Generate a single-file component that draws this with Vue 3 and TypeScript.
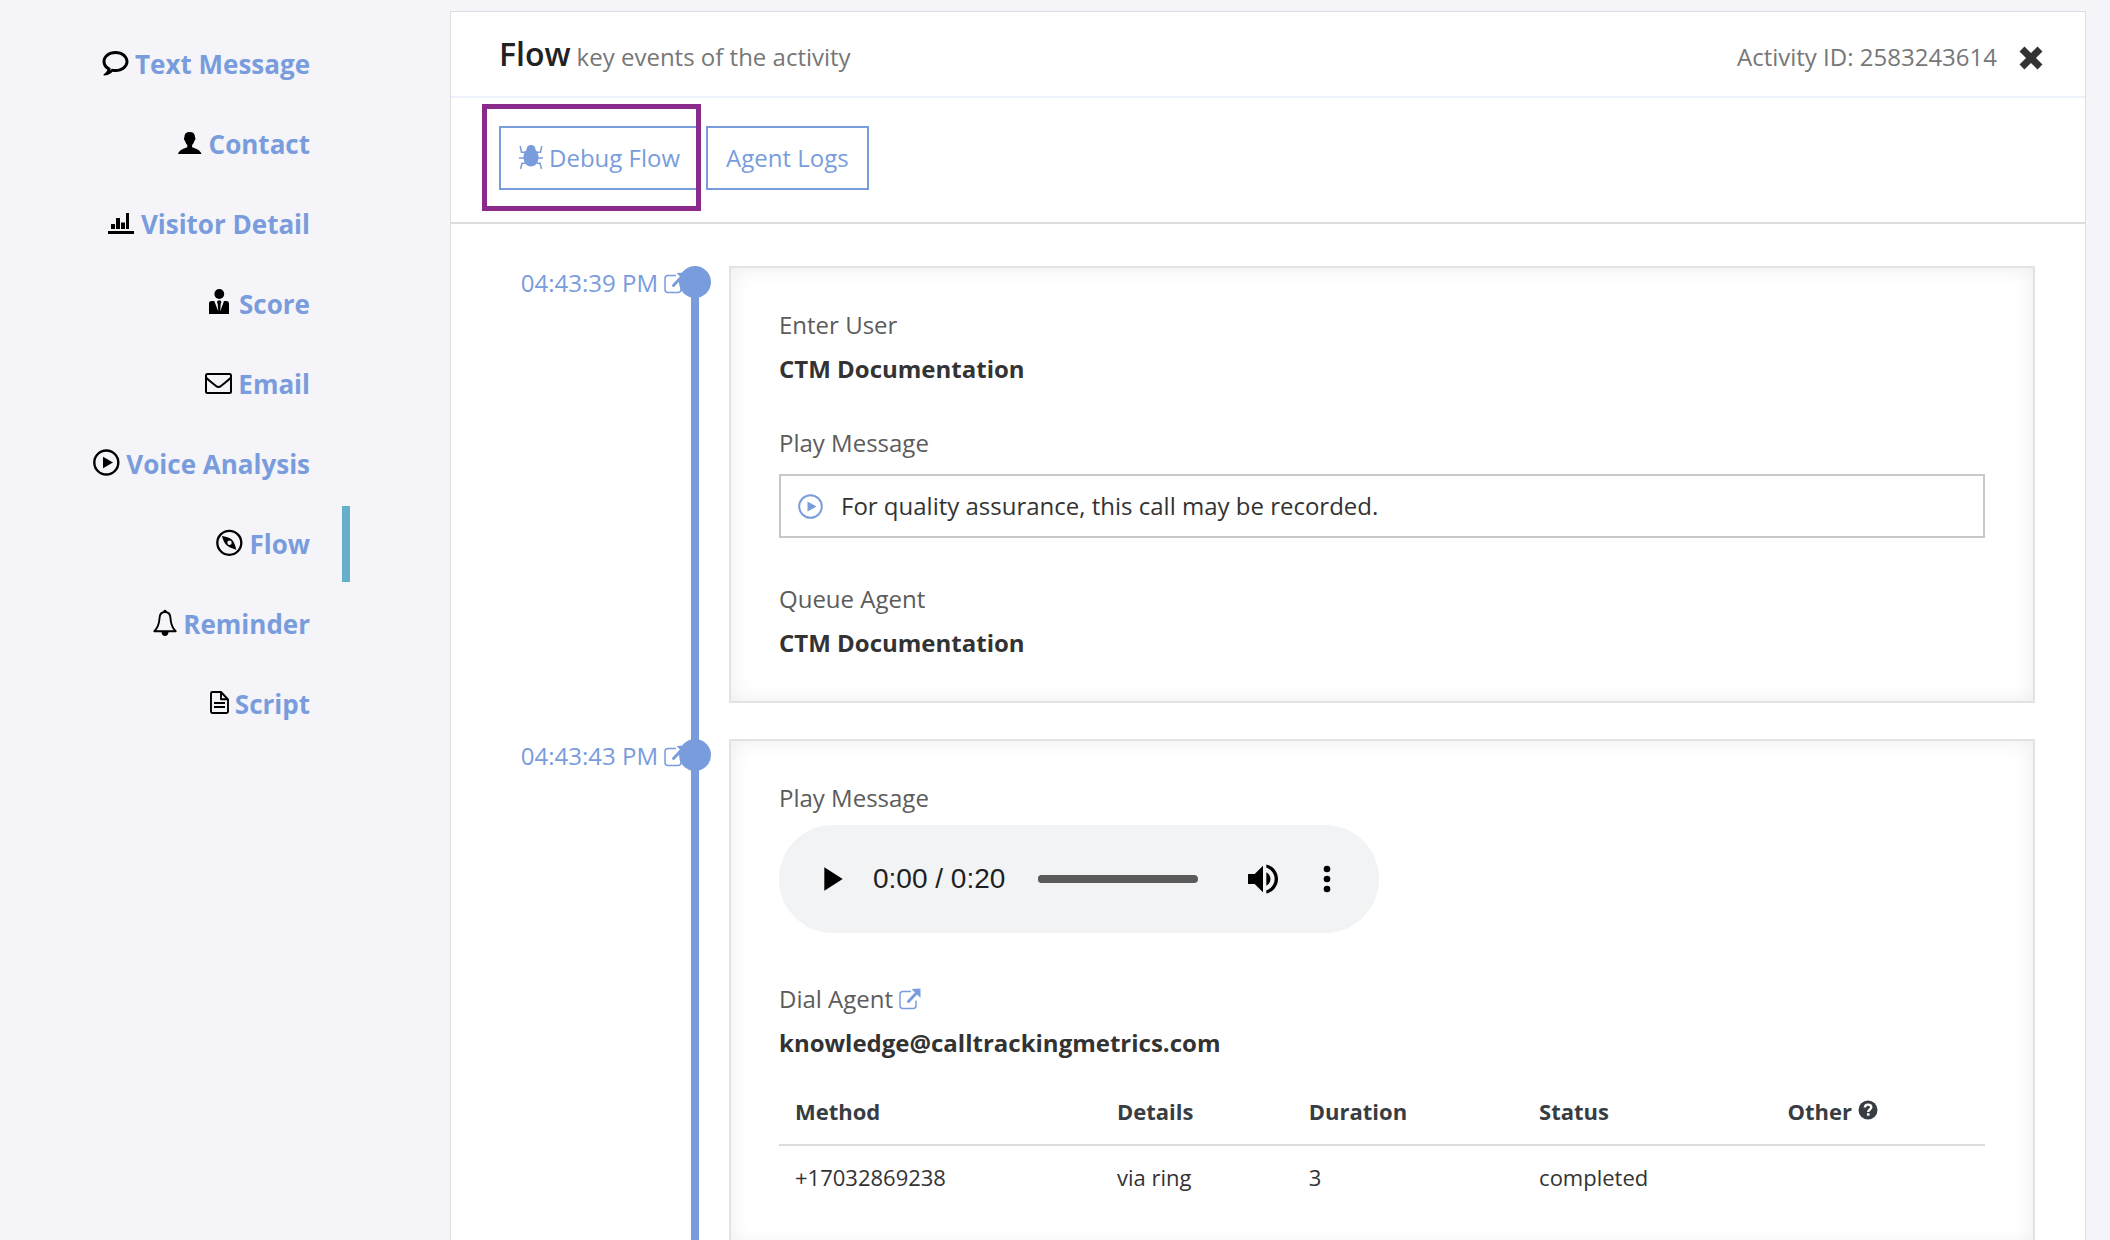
<script setup lang="ts">
import { ref } from 'vue'

type IconName = 'comment' | 'person' | 'chart' | 'agent' | 'mail' | 'play' | 'compass' | 'bell' | 'script'

interface NavItem {
  label: string
  icon: IconName
  width: number
}

interface DialRow {
  method: string
  details: string
  duration: string
  status: string
  other: string
}

const navItems: NavItem[] = [
  { label: 'Text Message', icon: 'comment', width: 27 },
  { label: 'Contact', icon: 'person', width: 25 },
  { label: 'Visitor Detail', icon: 'chart', width: 27 },
  { label: 'Score', icon: 'agent', width: 24 },
  { label: 'Email', icon: 'mail', width: 27 },
  { label: 'Voice Analysis', icon: 'play', width: 27 },
  { label: 'Flow', icon: 'compass', width: 27 },
  { label: 'Reminder', icon: 'bell', width: 24 },
  { label: 'Script', icon: 'script', width: 19 },
]

const active = ref('Flow')
const position = ref(0)

const rows: DialRow[] = [
  { method: '+17032869238', details: 'via ring', duration: '3', status: 'completed', other: '' },
]
</script>

<template>
  <div class="page">
    <nav class="sidebar" aria-label="Activity sections">
      <ul>
        <li v-for="item in navItems" :key="item.label" :class="{ active: item.label === active }">
          <a href="#" @click.prevent="active = item.label">
            <svg class="nav-icon" :width="item.width" height="30" :viewBox="`0 -1 ${item.width} 30`" aria-hidden="true">
              <path
                v-if="item.icon === 'comment'"
                fill-rule="evenodd"
                d="M13.5 1C20.800 1 26.500 5.800 26.500 11.500S20.800 22 13.500 22C12.600 22 11.600 22 10.700 21.800C8.300 24.200 5.300 25.500 2 25.500C1.300 25.500 1.300 24.700 1.800 24.300C3.500 23 4.900 21.500 5.300 19.800C2.200 17.900.5 15 .5 11.500C.5 5.800 6.200 1 13.500 1ZM13.500 4C7.900 4 3.500 7.300 3.500 11.500C3.500 14.200 5.200 16.500 8.700 18.200L8.100 20.400L9.900 18.800C11 19 12.300 19.100 13.500 19.100C19.100 19.100 23.500 15.700 23.500 11.500S19.100 4 13.500 4Z"
              />
              <path
                v-else-if="item.icon === 'person'"
                d="M11.700 2C15.200 2 17 3.900 17 7.200C18 8.600 17.300 10.200 16.300 11C15.900 12.700 15.100 14 14.100 15V17.200C15.600 18.100 22.500 19.300 23.500 24H0C1 19.300 7.800 18.100 9.300 17.200V15C8.300 14 7.500 12.700 7.100 11C6.100 10.200 5.400 8.600 6.400 7.200C6.400 3.900 8.200 2 11.700 2Z"
              />
              <path
                v-else-if="item.icon === 'chart'"
                d="M0 21H26V24H0ZM3 14H7V19H3ZM8 8H12V19H8ZM13 12.500H17V19H13ZM18 3H21V19H18Z"
              />
              <g v-else-if="item.icon === 'agent'">
                <circle cx="10.300" cy="4" r="4.900" />
                <path d="M0 24V13.500Q0 11 2.500 11H5.300L9.300 21.500L8.700 14L8 12L8.800 10.500H11.600L12.400 12L11.700 14L11.200 21.500L15 11H17.800Q20 11 20 13.500V24Z" />
              </g>
              <g v-else-if="item.icon === 'mail'" fill="none" stroke="#000" stroke-width="2">
                <rect x="1" y="4" width="25" height="19" rx="1.500" />
                <path d="M1.500 8C5 11.500 8 13.500 11 16Q13.500 18 16 16C19 13.500 22 11.500 25.500 8" />
              </g>
              <g v-else-if="item.icon === 'play'">
                <circle cx="13.300" cy="12.500" r="12" fill="none" stroke="#000" stroke-width="2.400" />
                <path d="M10 6.800V18.200L20 12.500Z" />
              </g>
              <g v-else-if="item.icon === 'compass'">
                <circle cx="13.300" cy="12.800" r="12" fill="none" stroke="#000" stroke-width="2.300" />
                <path
                  fill-rule="evenodd"
                  d="M5.900 6C9.500 6.300 13.500 7.500 16 9.800C18.200 12 19.500 16 20.300 19.800C16.500 18.500 12.500 17 10.400 15C8.300 12.900 6.800 9.500 5.900 6ZM13.500 10.500A2.200 2.200 0 1 0 13.500 14.900A2.200 2.200 0 1 0 13.500 10.500Z"
                />
              </g>
              <g v-else-if="item.icon === 'bell'">
                <path
                  d="M12 2C8.800 2 6.900 4.300 6.600 7.500C6.300 12.500 5.500 17.500 1.300 21.200H22.700C18.500 17.500 17.700 12.500 17.400 7.500C17.100 4.300 15.200 2 12 2Z"
                  fill="none" stroke="#000" stroke-width="1.900" stroke-linejoin="round"
                />
                <circle cx="12" cy="1.400" r="1.700" />
                <path d="M8.500 22H15.500C15.500 27.300 8.500 27.300 8.500 22Z" />
              </g>
              <g v-else fill="none" stroke="#000" stroke-width="1.900" stroke-linejoin="round">
                <path d="M2.500 2H11L18 9.500V21.500Q18 23 16.500 23H2.500Q1 23 1 21.500V3.500Q1 2 2.500 2Z" />
                <path d="M11 2V9.300H18M4 13H15M4 17H15" />
              </g>
            </svg>
            <span>{{ item.label }}</span>
          </a>
        </li>
      </ul>
    </nav>

    <main class="panel">
      <header class="panel-head">
        <h1>Flow <small>key events of the activity</small></h1>
        <div class="head-right">
          <span>Activity ID: 2583243614</span>
          <button type="button" class="close" aria-label="Close">
            <svg width="26" height="26" viewBox="0 -1 26 26" aria-hidden="true">
              <path d="M4 4L22 22M22 4L4 22" fill="none" stroke="#333" stroke-width="7" />
            </svg>
          </button>
        </div>
      </header>

      <div class="toolbar">
        <div class="highlighted">
          <button type="button" class="btn">
            <svg width="24" height="26" viewBox="0 0 24 26" aria-hidden="true">
              <path d="M12 0C14.800 0 16.500 1.900 16.600 5C18.700 7 19.500 9.300 19.500 12C19.500 17.500 16.600 21.500 12 21.500S4.500 17.500 4.500 12C4.500 9.300 5.300 7 7.400 5C7.500 1.900 9.200 0 12 0Z" fill="currentColor" />
              <path
                d="M1.200 1L2.500 7.200H7M22.800 1L21.500 7.200H17M0 13H5M19 13H24M1.500 24L3 18.200H6.500M22.500 24L21 18.200H17.500"
                fill="none" stroke="currentColor" stroke-width="1.500"
              />
            </svg>
            Debug Flow
          </button>
        </div>
        <button type="button" class="btn">Agent Logs</button>
      </div>

      <div class="timeline">
        <section class="entry">
          <a href="#" class="time" @click.prevent>
            04:43:39 PM
            <svg width="22" height="22" viewBox="0 0 22 22" aria-hidden="true">
              <path d="M12 3.500H4Q1 3.500 1 6.500V17.500Q1 20.500 4 20.500H14Q17 20.500 17 17.500V12.500" fill="none" stroke="currentColor" stroke-width="1.500" />
              <path d="M9.500 13.500L17 5.500" stroke="currentColor" stroke-width="3" stroke-linecap="round" />
              <path d="M12.500 1L21.500.5V10Z" fill="currentColor" />
            </svg>
          </a>
          <div class="rail"></div>
          <div class="card">
            <div class="event">
              <p class="label">Enter User</p>
              <p class="name">CTM Documentation</p>
            </div>
            <div class="event">
              <p class="label">Play Message</p>
              <div class="message">
                <button type="button" class="play-message" aria-label="Play message">
                  <svg width="25" height="25" viewBox="0 0 25 25" aria-hidden="true">
                    <circle cx="12.500" cy="12.500" r="11.300" fill="none" stroke="currentColor" stroke-width="2" />
                    <path d="M9.500 7.500V17.500L18.500 12.500Z" fill="currentColor" />
                  </svg>
                </button>
                <span>For quality assurance, this call may be recorded.</span>
              </div>
            </div>
            <div class="event">
              <p class="label">Queue Agent</p>
              <p class="name">CTM Documentation</p>
            </div>
          </div>
        </section>

        <section class="entry">
          <a href="#" class="time" @click.prevent>
            04:43:43 PM
            <svg width="22" height="22" viewBox="0 0 22 22" aria-hidden="true">
              <path d="M12 3.500H4Q1 3.500 1 6.500V17.500Q1 20.500 4 20.500H14Q17 20.500 17 17.500V12.500" fill="none" stroke="currentColor" stroke-width="1.500" />
              <path d="M9.500 13.500L17 5.500" stroke="currentColor" stroke-width="3" stroke-linecap="round" />
              <path d="M12.500 1L21.500.5V10Z" fill="currentColor" />
            </svg>
          </a>
          <div class="rail"></div>
          <div class="card">
            <div class="event">
              <p class="label">Play Message</p>
              <div class="player">
                <button type="button" aria-label="Play">
                  <svg width="40" height="40" viewBox="0 0 24 24" aria-hidden="true"><path d="M8 5v14l11-7z" /></svg>
                </button>
                <span class="clock">0:00 / 0:20</span>
                <input v-model.number="position" type="range" min="0" max="20" aria-label="Playback position" />
                <button type="button" aria-label="Mute">
                  <svg width="40" height="40" viewBox="0 0 24 24" aria-hidden="true">
                    <path d="M3 9v6h4l5 5V4L7 9H3zm13.500 3c0-1.770-1.020-3.290-2.500-4.030v8.050c1.480-.73 2.500-2.250 2.500-4.020zM14 3.230v2.060c2.890.86 5 3.540 5 6.710s-2.110 5.850-5 6.710v2.060c4.010-.91 7-4.490 7-8.770s-2.990-7.860-7-8.770z" />
                  </svg>
                </button>
                <button type="button" class="more" aria-label="More options">
                  <svg width="40" height="40" viewBox="0 0 24 24" aria-hidden="true">
                    <circle cx="12" cy="6" r="2" /><circle cx="12" cy="12" r="2" /><circle cx="12" cy="18" r="2" />
                  </svg>
                </button>
              </div>
            </div>
            <div class="event">
              <p class="label">
                Dial Agent
                <a href="#" aria-label="Open agent" @click.prevent>
                  <svg width="22" height="22" viewBox="0 0 22 22" aria-hidden="true">
                    <path d="M12 3.500H4Q1 3.500 1 6.500V17.500Q1 20.500 4 20.500H14Q17 20.500 17 17.500V12.500" fill="none" stroke="currentColor" stroke-width="1.500" />
                    <path d="M9.500 13.500L17 5.500" stroke="currentColor" stroke-width="3" stroke-linecap="round" />
                    <path d="M12.500 1L21.500.5V10Z" fill="currentColor" />
                  </svg>
                </a>
              </p>
              <p class="name">knowledge@calltrackingmetrics.com</p>
              <table>
                <thead>
                  <tr>
                    <th class="col-method" scope="col">Method</th>
                    <th class="col-details" scope="col">Details</th>
                    <th class="col-duration" scope="col">Duration</th>
                    <th class="col-status" scope="col">Status</th>
                    <th scope="col">
                      <span class="with-help">
                        Other
                        <svg width="20" height="20" viewBox="0 1 20 20" aria-hidden="true">
                          <circle cx="10" cy="10" r="9.500" fill="currentColor" />
                          <path d="M6.800 7.500C7 5.300 8.400 4.600 10.100 4.600C12 4.600 13.300 5.700 13.300 7.300C13.300 9.500 10.200 9.500 10.200 12" fill="none" stroke="#fff" stroke-width="2.400" />
                          <rect x="8.900" y="13.200" width="2.600" height="2.500" fill="#fff" />
                        </svg>
                      </span>
                    </th>
                  </tr>
                </thead>
                <tbody>
                  <tr v-for="row in rows" :key="row.method">
                    <td>{{ row.method }}</td>
                    <td>{{ row.details }}</td>
                    <td>{{ row.duration }}</td>
                    <td>{{ row.status }}</td>
                    <td>{{ row.other }}</td>
                  </tr>
                </tbody>
              </table>
            </div>
          </div>
        </section>
      </div>
    </main>
  </div>
</template>

<style>
body {
  margin: 0;
  background: #f4f4f9;
}
</style>

<style scoped>
.page {
  display: flex;
  min-height: 100vh;
  box-sizing: border-box;
  padding: 11px 24px 0 0;
  background: #f4f4f9;
  color: #333;
  font-family: "Open Sans", "Noto Sans", sans-serif;
  font-size: 24px;
  line-height: 36px;
}

a {
  color: #799cdc;
  text-decoration: none;
}

button {
  margin: 0;
  padding: 0;
  border: 0;
  background: none;
  color: inherit;
  font: inherit;
  cursor: pointer;
}

svg {
  display: block;
  flex: none;
  overflow: visible;
}

.sidebar {
  flex: none;
  width: 350px;
  margin-right: 100px;
}

.sidebar ul {
  display: flex;
  flex-direction: column;
  gap: 4px;
  margin: 0;
  padding: 15px 0 0;
  list-style: none;
}

.sidebar li {
  border-right: 8px solid transparent;
}

.sidebar li.active {
  border-right-color: #66afcb;
}

.sidebar a {
  display: flex;
  align-items: center;
  justify-content: flex-end;
  gap: 6px;
  height: 76px;
  padding-right: 32px;
  font-size: 26px;
  font-weight: 700;
}

.nav-icon {
  fill: #000;
}

.panel {
  flex: 1;
  min-width: 0;
  border: 1px solid #dddde1;
  background: #fff;
}

.panel-head {
  display: flex;
  align-items: baseline;
  justify-content: space-between;
  padding: 20px 41px 17px 48px;
  border-bottom: 2px solid #edf1fc;
  color: #777;
}

.panel-head h1 {
  display: flex;
  align-items: baseline;
  gap: 6px;
  margin: 0;
  color: #222;
  font-size: 32px;
  font-weight: 600;
  line-height: 44px;
}

.panel-head small {
  color: #777;
  font-size: 24px;
  font-weight: 400;
}

.head-right {
  display: flex;
  align-items: center;
  gap: 21px;
}

.toolbar {
  display: flex;
  gap: 6px;
  padding: 28px 48px 32px;
  border-bottom: 2px solid #ddd;
}

.btn {
  display: flex;
  align-items: center;
  gap: 6px;
  padding: 12px 18px;
  border: 2px solid #799cdc;
  color: #799cdc;
}

.highlighted {
  position: relative;
}

.highlighted::after {
  content: "";
  position: absolute;
  inset: -22px -1px -21px -17px;
  border: 5px solid #8a2a8b;
  pointer-events: none;
}

.timeline {
  display: flex;
  flex-direction: column;
  gap: 36px;
  padding: 42px 50px 42px 48px;
}

.entry {
  display: flex;
}

.time {
  display: flex;
  flex: none;
  align-items: center;
  align-self: flex-start;
  justify-content: flex-end;
  gap: 6px;
  width: 187px;
  line-height: 34px;
}

.rail {
  position: relative;
  flex: none;
  width: 32px;
  margin: 0 18px 0 -7px;
}

.rail::before {
  content: "";
  position: absolute;
  top: 0;
  left: 0;
  width: 32px;
  height: 32px;
  border-radius: 50%;
  background: #799cdc;
}

.rail::after {
  content: "";
  position: absolute;
  top: 16px;
  bottom: -52px;
  left: 12px;
  width: 8px;
  background: #799cdc;
}

.card {
  flex: 1;
  min-width: 0;
  padding: 35px 48px 36px;
  border: 2px solid #e3e3e3;
  box-shadow: inset 0 0 20px rgba(0, 0, 0, 0.08);
}

.event + .event {
  margin-top: 30px;
}

.label,
.name {
  margin: 0;
  line-height: 44px;
}

.label {
  display: flex;
  align-items: center;
  gap: 6px;
  color: #5c5c5c;
}

.name {
  color: #333;
  font-weight: 700;
}

.message {
  display: flex;
  align-items: center;
  gap: 18px;
  margin: 9px 0 39px;
  padding: 12px 17px;
  border: 2px solid #c8c8c8;
}

.play-message {
  color: #799cdc;
}

.player {
  display: flex;
  align-items: center;
  box-sizing: border-box;
  width: 600px;
  max-width: 100%;
  height: 108px;
  margin: 5px 0 44px;
  padding: 0 32px;
  border-radius: 54px;
  background: #f1f3f4;
  color: #1f1f1f;
}

.clock {
  margin-left: 22px;
  font-family: "Liberation Sans", Arial, sans-serif;
  font-size: 28px;
}

.player input {
  flex: 1;
  min-width: 0;
  height: 8px;
  margin: 0 45px 0 33px;
  border-radius: 4px;
  background: #5a5a5a;
  appearance: none;
}

.player input::-webkit-slider-thumb {
  width: 8px;
  height: 8px;
  border-radius: 50%;
  background: #5a5a5a;
  appearance: none;
}

.more {
  margin-left: 24px;
}

table {
  width: 100%;
  margin-top: 14px;
  border-collapse: collapse;
  table-layout: fixed;
  font-size: 22px;
  line-height: 32px;
}

th,
td {
  box-sizing: border-box;
  padding: 15px 16px 17px;
  text-align: left;
}

th {
  padding-top: 16px;
  border-bottom: 2px solid #ddd;
  color: #373d42;
  font-weight: 700;
}

.col-method {
  width: 26.7%;
}

.col-details {
  width: 15.9%;
}

.col-duration {
  width: 19.1%;
}

.col-status {
  width: 20.6%;
}

.with-help {
  display: flex;
  align-items: center;
  gap: 6px;
}
</style>
